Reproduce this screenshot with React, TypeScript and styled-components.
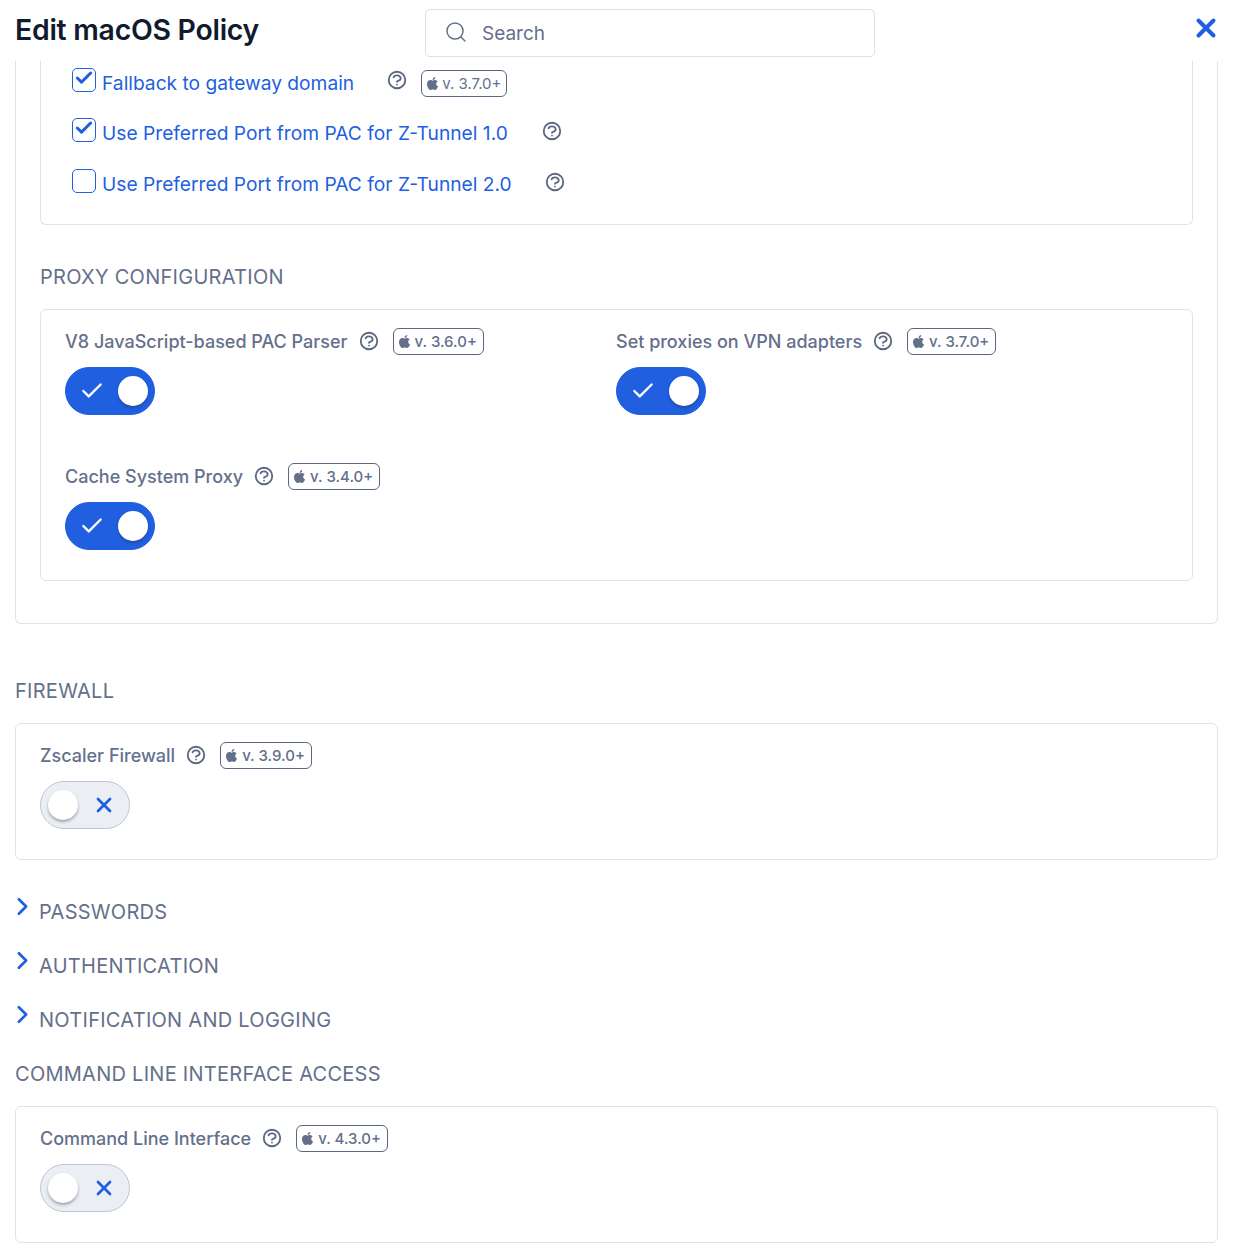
import React from "react";
import { Check, ChevronRight, Search, X } from "lucide-react";
import { FaApple } from "react-icons/fa";
import { HiOutlineQuestionMarkCircle } from "react-icons/hi";
import styled, { createGlobalStyle } from "styled-components";

const GlobalStyle = createGlobalStyle`
  html, body {
    margin: 0;
    background: #fff;
    font-family: Inter, "Liberation Sans", sans-serif;
  }
`;

const Page = styled.div`
  box-sizing: border-box;
  width: 1244px;
  height: 1252px;
  padding: 0 26px 0 15px;
  overflow: hidden;
`;

const Header = styled.header`
  display: grid;
  grid-template-columns: 410px 450px 1fr;
  align-items: start;
  height: 61px;
`;

const Title = styled.h1`
  margin: 11px 0 0;
  color: #111a2e;
  font-size: 28.4px;
  line-height: 38px;
  font-weight: 600;
  letter-spacing: -0.25px;
  white-space: nowrap;
`;

const SearchBox = styled.div`
  box-sizing: border-box;
  display: flex;
  align-items: center;
  gap: 14px;
  height: 48px;
  margin-top: 9px;
  padding-left: 18px;
  border: 1px solid #d9e0ea;
  border-radius: 5px;
  color: #64708b;
  font-size: 19px;
  & > svg {
    margin-top: -2px;
  }
`;

const CloseButton = styled.button`
  justify-self: end;
  display: flex;
  margin: 13px -3px 0 0;
  padding: 0;
  border: 0;
  background: none;
  color: #1f5fe0;
`;

const OuterCard = styled.section`
  box-sizing: border-box;
  height: 563px;
  padding: 0 24px;
  border: 1px solid #dde3ee;
  border-top: 0;
  border-radius: 0 0 6px 6px;
`;

const GatewayCard = styled.div`
  box-sizing: border-box;
  height: 164px;
  padding: 7px 0 0 31px;
  border: 1px solid #dde3ee;
  border-top: 0;
  border-radius: 0 0 6px 6px;
`;

const CheckRow = styled.div<{ $gap: number }>`
  display: flex;
  align-items: center;
  height: 24px;
  margin-bottom: 26px;
  color: #1f5fe0;
  font-size: 19.2px;
  &:nth-child(2) {
    margin-bottom: 27px;
  }
  & > svg {
    margin-left: ${(p) => p.$gap}px;
  }
  &:not(:first-child) > svg {
    margin-top: 2px;
  }
`;

const CheckBox = styled.span`
  box-sizing: border-box;
  display: flex;
  align-items: center;
  justify-content: center;
  flex: none;
  width: 24px;
  height: 24px;
  margin-right: 6px;
  border: 1px solid #1f5fe0;
  border-radius: 5px;
  & > svg {
    margin-top: -5px;
  }
`;

const CheckLabel = styled.span`
  position: relative;
  top: 3px;
  white-space: nowrap;
`;

const SubHeading = styled.h3`
  margin: 0;
  color: #64708b;
  font-size: 20px;
  line-height: 28px;
  font-weight: 400;
  letter-spacing: 0.27px;
  text-transform: uppercase;
`;

const ProxyHeading = styled(SubHeading)`
  margin: 38px 0 18px;
`;

const ProxyCard = styled.div`
  box-sizing: border-box;
  display: grid;
  grid-template-columns: 551px 1fr;
  grid-auto-rows: 135px;
  height: 272px;
  padding: 17px 24px 0;
  border: 1px solid #dde3ee;
  border-radius: 6px;
`;

const SectionHeading = styled(SubHeading)`
  margin: 53px 0 18px;
`;

const FeatureCard = styled.div`
  box-sizing: border-box;
  height: 137px;
  padding: 17px 24px 0;
  border: 1px solid #dde3ee;
  border-radius: 6px;
`;

const LabelRow = styled.div`
  display: flex;
  align-items: center;
  height: 28px;
  margin-bottom: 12px;
  color: #64708b;
  font-size: 18px;
  font-weight: 500;
  white-space: nowrap;
`;

const HelpIcon = styled(HiOutlineQuestionMarkCircle)`
  flex: none;
  width: 22px;
  height: 22px;
  color: #5b6780;
`;

const LabelHelp = styled(HelpIcon)`
  margin: 0 13px 0 10px;
`;

const Version = styled.span`
  box-sizing: border-box;
  display: inline-flex;
  align-items: center;
  gap: 3px;
  height: 27px;
  padding: 0 6px 0 5px;
  border: 1px solid #5b6780;
  border-radius: 6px;
  color: #64708b;
  font-size: 15px;
  font-weight: 500;
  white-space: nowrap;
  & > svg {
    flex: none;
    width: 15px;
    height: 15px;
    margin-left: -2px;
  }
`;

const CheckVersion = styled(Version)`
  gap: 2px;
  margin: 7px 0 0 13px;
  padding-right: 4px;
  font-weight: 400;
`;

const Toggle = styled.div<{ $on?: boolean }>`
  box-sizing: border-box;
  position: relative;
  display: flex;
  align-items: center;
  width: 90px;
  height: 48px;
  padding: 0 13px;
  border: 1px solid ${(p) => (p.$on ? "#1f5fe0" : "#bcc6d6")};
  border-radius: 24px;
  background: ${(p) => (p.$on ? "#1f5fe0" : "#ebeff4")};
  justify-content: ${(p) => (p.$on ? "flex-start" : "flex-end")};
  color: ${(p) => (p.$on ? "#fff" : "#1f5fe0")};
`;

const Knob = styled.span<{ $on?: boolean }>`
  position: absolute;
  top: 8px;
  ${(p) => (p.$on ? "right: 6px;" : "left: 7px;")}
  width: 30px;
  height: 30px;
  border-radius: 50%;
  background: #fff;
  box-shadow: 0 2px 3px rgba(40, 50, 70, 0.4);
`;

const Accordion = styled.div`
  display: flex;
  align-items: flex-start;
  height: 54px;
  color: #64708b;
  font-size: 20px;
  line-height: 28px;
  letter-spacing: 0.27px;
  text-transform: uppercase;
  & > svg {
    flex: none;
    margin: -6px 2px 0 -7px;
    color: #1f5fe0;
  }
`;

const Accordions = styled.div`
  margin-top: 38px;
`;

const CliHeading = styled(SubHeading)`
  margin: 0 0 18px;
`;

function Feature({ label, version }: { label: string; version: string }) {
  return (
    <div>
      <LabelRow>
        {label}
        <LabelHelp />
        <Version>
          <FaApple />
          v. {version}+
        </Version>
      </LabelRow>
      <Toggle $on>
        <Check size={26} strokeWidth={2.2} />
        <Knob $on />
      </Toggle>
    </div>
  );
}

function OffFeature({ label, version }: { label: string; version: string }) {
  return (
    <FeatureCard>
      <LabelRow>
        {label}
        <LabelHelp />
        <Version>
          <FaApple />
          v. {version}+
        </Version>
      </LabelRow>
      <Toggle>
        <Knob />
        <X size={24} strokeWidth={2.8} />
      </Toggle>
    </FeatureCard>
  );
}

function CheckOption({
  label,
  checked,
  gap,
  version,
}: {
  label: string;
  checked?: boolean;
  gap: number;
  version?: string;
}) {
  return (
    <CheckRow $gap={gap}>
      <CheckBox>{checked && <Check size={20} strokeWidth={3.6} />}</CheckBox>
      <CheckLabel>{label}</CheckLabel>
      <HelpIcon />
      {version && (
        <CheckVersion>
          <FaApple />
          v. {version}+
        </CheckVersion>
      )}
    </CheckRow>
  );
}

export default function App() {
  return (
    <Page>
      <GlobalStyle />
      <Header>
        <Title>Edit macOS Policy</Title>
        <SearchBox>
          <Search size={24} strokeWidth={1.5} />
          Search
        </SearchBox>
        <CloseButton>
          <X size={30} strokeWidth={3.2} />
        </CloseButton>
      </Header>
      <OuterCard>
        <GatewayCard>
          <CheckOption label="Fallback to gateway domain" checked gap={32} version="3.7.0" />
          <CheckOption label="Use Preferred Port from PAC for Z-Tunnel 1.0" checked gap={33} />
          <CheckOption label="Use Preferred Port from PAC for Z-Tunnel 2.0" gap={32} />
        </GatewayCard>
        <ProxyHeading>Proxy Configuration</ProxyHeading>
        <ProxyCard>
          <Feature label="V8 JavaScript-based PAC Parser" version="3.6.0" />
          <Feature label="Set proxies on VPN adapters" version="3.7.0" />
          <Feature label="Cache System Proxy" version="3.4.0" />
        </ProxyCard>
      </OuterCard>
      <SectionHeading>Firewall</SectionHeading>
      <OffFeature label="Zscaler Firewall" version="3.9.0" />
      <Accordions>
        {["Passwords", "Authentication", "Notification and Logging"].map((name) => (
          <Accordion key={name}>
            <ChevronRight size={29} strokeWidth={2.2} />
            {name}
          </Accordion>
        ))}
      </Accordions>
      <CliHeading>Command Line Interface Access</CliHeading>
      <OffFeature label="Command Line Interface" version="4.3.0" />
    </Page>
  );
}
